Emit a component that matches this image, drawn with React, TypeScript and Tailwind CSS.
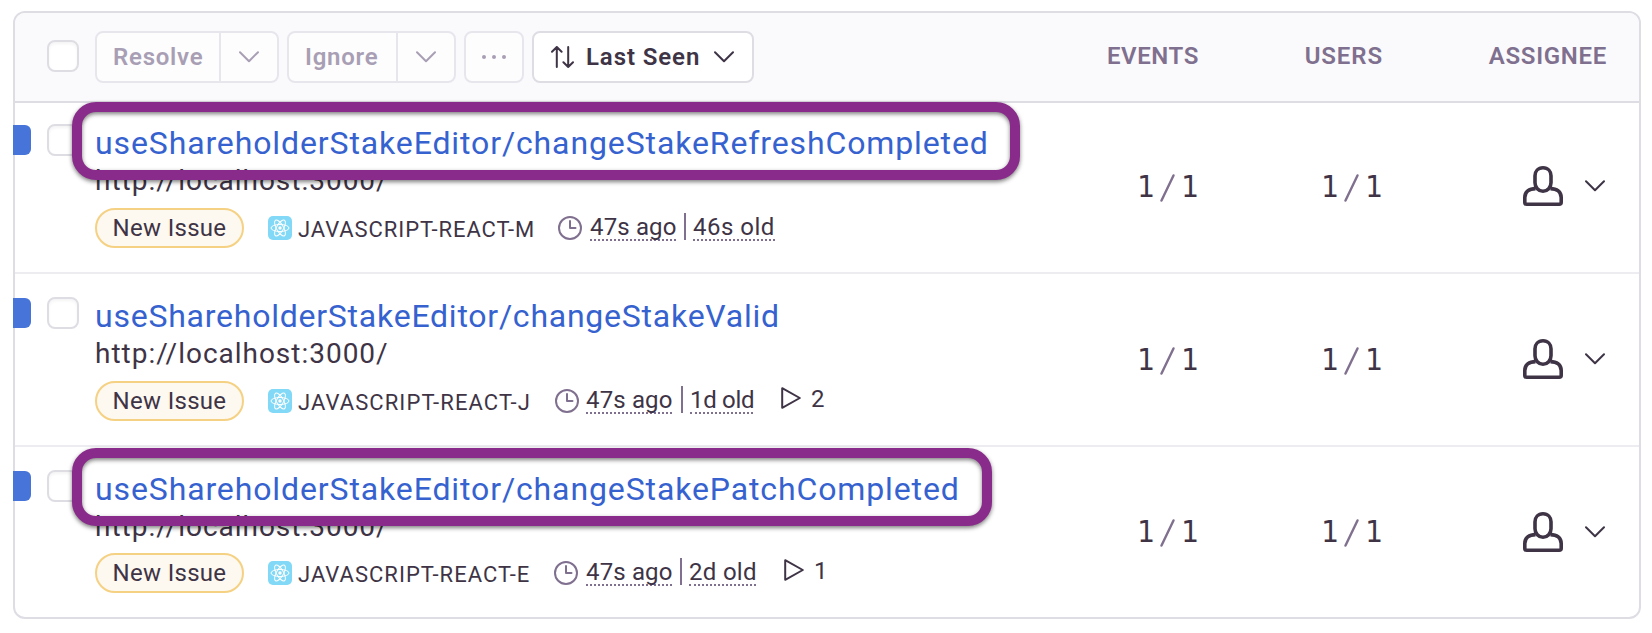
type Issue = {
  title: string;
  titleTracking: string;
  titleBox?: string;
  project: string;
  projectWidth: string;
  clockGap: string;
  age: string;
  ageWidth: string;
  barGap: string;
  replays?: string;
  replayGap?: string;
  row: string;
  metaGap: string;
  ratioGap: string;
};

const issues: Issue[] = [
  {
    title: 'useShareholderStakeEditor/changeStakeRefreshCompleted',
    titleTracking: 'tracking-[0.88px]',
    titleBox: 'w-[948px]',
    project: 'JAVASCRIPT-REACT-M',
    projectWidth: 'w-[260px] tracking-[0.92px]',
    clockGap: 'ml-[8px]',
    age: '46s old',
    ageWidth: 'w-[82px] tracking-[0.5px]',
    barGap: 'ml-[8px] mr-[7px]',
    row: 'h-[173px] border-b-2',
    metaGap: 'mt-[10px]',
    ratioGap: 'mt-[66px]',
  },
  {
    title: 'useShareholderStakeEditor/changeStakeValid',
    titleTracking: 'tracking-[0.76px]',
    project: 'JAVASCRIPT-REACT-J',
    projectWidth: 'w-[257px] tracking-[1.08px]',
    clockGap: 'ml-[7px]',
    age: '1d old',
    ageWidth: 'w-[63px] tracking-[-0.3px]',
    barGap: 'ml-[9px] mr-[7px]',
    replays: '2',
    replayGap: 'ml-[28px]',
    row: 'h-[173px] border-b-2',
    metaGap: 'mt-[10px]',
    ratioGap: 'mt-[66px]',
  },
  {
    title: 'useShareholderStakeEditor/changeStakePatchCompleted',
    titleTracking: 'tracking-[0.88px]',
    titleBox: 'w-[920px]',
    project: 'JAVASCRIPT-REACT-E',
    projectWidth: 'w-[256px] tracking-[1.02px]',
    clockGap: 'ml-[8px]',
    age: '2d old',
    ageWidth: 'w-[67px] tracking-[0.3px]',
    barGap: 'ml-[8px] mr-[7px]',
    replays: '1',
    replayGap: 'ml-[28px]',
    row: 'h-[170px]',
    metaGap: 'mt-[9px]',
    ratioGap: 'mt-[65px]',
  },
];

function Chevron({ className }: { className?: string }) {
  return (
    <svg
      className={`h-[12px] w-[20px] shrink-0 ${className ?? ''}`}
      viewBox="0 0 20 12"
      fill="none"
      stroke="currentColor"
      strokeWidth="2"
      strokeLinecap="round"
      strokeLinejoin="round"
    >
      <path d="M1 1.2 10 10.2 19 1.2" />
    </svg>
  );
}

function Checkbox({ className }: { className?: string }) {
  return (
    <span
      className={`block size-[32px] shrink-0 rounded-[8px] border-2 border-[#dfdde4] bg-white shadow-[inset_0_2px_3px_rgba(43,34,51,0.05)] ${className ?? ''}`}
    />
  );
}

function SplitButton({ label, labelWidth, className }: { label: string; labelWidth: string; className: string }) {
  return (
    <div
      className={`flex h-[52px] shrink-0 rounded-[8px] border-2 border-[#e8e6ed] bg-[#fdfdfe] text-[#a99fb5] ${className}`}
    >
      <span
        className={`flex items-center border-r-2 border-[#e8e6ed] pl-[16px] text-[24px] font-semibold tracking-[0.75px] ${labelWidth}`}
      >
        {label}
      </span>
      <span className="flex flex-1 items-center justify-center">
        <Chevron />
      </span>
    </div>
  );
}

function ReactBadge() {
  return (
    <svg className="size-[24px] shrink-0" viewBox="0 0 24 24">
      <rect width="24" height="24" rx="5" fill="#81d8f7" />
      <g fill="none" stroke="#fff" strokeWidth="1">
        <ellipse cx="12" cy="12" rx="9" ry="3.5" />
        <ellipse cx="12" cy="12" rx="9" ry="3.5" transform="rotate(60 12 12)" />
        <ellipse cx="12" cy="12" rx="9" ry="3.5" transform="rotate(120 12 12)" />
      </g>
      <circle cx="12" cy="12" r="1.7" fill="#fff" />
    </svg>
  );
}

function Clock() {
  return (
    <svg className="size-[24px] shrink-0" viewBox="0 0 24 24" fill="none" stroke="#80708f" strokeWidth="2" strokeLinecap="round">
      <circle cx="12" cy="12" r="11" />
      <path d="M12 5v7h5.5" strokeLinejoin="round" />
    </svg>
  );
}

function Person() {
  return (
    <svg
      className="h-[40px] w-[40px] shrink-0"
      viewBox="0 0 40 40"
      fill="none"
      stroke="#3e3446"
      strokeWidth="3.6"
      strokeLinejoin="round"
    >
      <path d="M20 1.8c5 0 8 3.600 8 8v7c0 4.600-3.400 8.400-8 8.400s-8-3.800-8-8.400v-7c0-4.400 3-8 8-8Z" />
      <path d="M12.600 22.600C6 22.600 1.800 26 1.800 31.500V36.200a2 2 0 0 0 2 2H36.200a2 2 0 0 0 2-2V31.500C38.200 26 34 22.600 27.400 22.600" />
    </svg>
  );
}

function Ratio({ className }: { className: string }) {
  return (
    <div className={`flex h-[40px] shrink-0 items-center justify-end text-[31px] leading-[40px] ${className}`}>
      <span className="-mt-[2px] w-[20px] text-center font-['DejaVu_Sans_Condensed',sans-serif]">1</span>
      <svg className="mr-[5px] ml-[4px] mt-[2px] h-[28px] w-[15px]" viewBox="0 0 15 28" fill="none" stroke="#80708f" strokeWidth="2.4" strokeLinecap="round">
        <path d="M1.500 26.600 13.500 1.400" />
      </svg>
      <span className="-mt-[2px] w-[20px] text-center font-['DejaVu_Sans_Condensed',sans-serif]">1</span>
    </div>
  );
}

function IssueRow({ issue }: { issue: Issue }) {
  return (
    <div className={`flex shrink-0 border-[#edecf1] ${issue.row}`}>
      <span className="mt-[24px] -ml-[2px] block h-[30px] w-[18px] shrink-0 rounded-r-[6px] bg-[#4674d8]" />
      <Checkbox className="mt-[23px] ml-[16px]" />
      <div className="relative ml-[16px] flex flex-1 flex-col pt-[24px]">
        <div
          className={`h-[36px] text-[32px] leading-[36px] whitespace-nowrap text-[#3662d0] ${issue.titleTracking}`}
        >
          {issue.title}
        </div>
        <div className="mt-[3px] h-[34px] text-[28px] leading-[34px] tracking-[0.98px]">http://localhost:3000/</div>
        <div className={`flex h-[40px] items-center ${issue.metaGap}`}>
          <span className="flex h-[40px] w-[149px] shrink-0 items-center justify-center rounded-full border-2 border-[#f5d184] bg-[#fdf8f0] text-[24px] tracking-[0.3px]">
            New Issue
          </span>
          <span className="ml-[24px] flex">
            <ReactBadge />
          </span>
          <span className={`mt-[2px] ml-[6px] shrink-0 text-[22px] ${issue.projectWidth}`}>{issue.project}</span>
          <Clock />
          <span className={`mt-[-2px] h-[26px] w-[86px] shrink-0 text-[24px] leading-[26px] tracking-[0.15px] whitespace-nowrap ${issue.clockGap}`}>
            <span className="block h-[27px] border-b-2 border-dotted border-[#80708f]">47s ago</span>
          </span>
          <span className={`mt-[-3px] block h-[27px] w-[2px] shrink-0 bg-[#80708f] ${issue.barGap}`} />
          <span className={`mt-[-2px] h-[26px] shrink-0 text-[24px] leading-[26px] whitespace-nowrap ${issue.ageWidth}`}>
            <span className="block h-[27px] border-b-2 border-dotted border-[#80708f]">{issue.age}</span>
          </span>
          {issue.replays && (
            <span className={`mt-[-6px] flex items-center ${issue.replayGap}`}>
              <svg className="h-[22px] w-[20px]" viewBox="0 0 20 22" fill="none" stroke="#3e3446" strokeWidth="2" strokeLinejoin="round">
                <path d="M1.200 1.200V20.800L18.800 11Z" />
              </svg>
              <span className="mt-[2px] ml-[10px] text-[24px] leading-[28px]">{issue.replays}</span>
            </span>
          )}
        </div>
        {issue.titleBox && (
          <span
            className={`absolute top-[1px] left-[-23px] block h-[78px] rounded-[24px] border-[10px] border-[#892b8a] drop-shadow-[0_2px_2px_rgba(0,0,0,0.5)] ${issue.titleBox}`}
          />
        )}
      </div>
      <Ratio className={`w-[110px] ${issue.ratioGap}`} />
      <Ratio className={`w-[184px] ${issue.ratioGap}`} />
      <div className="mt-[65px] mr-[34px] ml-[139px] flex h-[40px] shrink-0 items-center">
        <Person />
        <Chevron className="-mt-px ml-[22px]" />
      </div>
    </div>
  );
}

export default function App() {
  return (
    <div className="h-[633px] w-[1652px] bg-white pt-[11px] pl-[13px] font-['Roboto',sans-serif] text-[#3e3446]">
      <div className="flex h-[608px] w-[1628px] flex-col rounded-[12px] border-2 border-[#dfdde4]">
        <div className="flex h-[90px] shrink-0 items-center rounded-t-[10px] border-b-2 border-[#dfdde4] bg-[#fafafc] pl-[32px]">
          <Checkbox className="-mt-[2px]" />
          <SplitButton label="Resolve" labelWidth="w-[124px]" className="ml-[16px] w-[184px]" />
          <SplitButton label="Ignore" labelWidth="w-[109px]" className="ml-[8px] w-[169px]" />
          <div className="ml-[8px] flex h-[52px] w-[60px] shrink-0 items-center justify-center gap-[6px] rounded-[8px] border-2 border-[#e8e6ed] bg-[#fdfdfe]">
            <span className="size-[4px] rounded-full bg-[#a99fb5]" />
            <span className="size-[4px] rounded-full bg-[#a99fb5]" />
            <span className="size-[4px] rounded-full bg-[#a99fb5]" />
          </div>
          <div className="ml-[8px] flex h-[52px] w-[222px] shrink-0 items-center rounded-[8px] border-2 border-[#dfdde4] bg-white pl-[17px]">
            <svg className="h-[22px] w-[23px]" viewBox="0 0 23 22" fill="none" stroke="currentColor" strokeWidth="2" strokeLinecap="round" strokeLinejoin="round">
              <path d="M5.800 21V1M1 5.800 5.800 1l4.800 4.800M17.200 1v20M12.400 16.200l4.800 4.800 4.800-4.800" />
            </svg>
            <span className="ml-[12px] w-[128px] text-[24px] font-semibold tracking-[0.9px]">Last Seen</span>
            <Chevron />
          </div>
          <div className="-mt-[2px] mr-[32px] flex flex-1 justify-end text-[24px] font-semibold text-[#80708f]">
            <span className="tracking-[0.6px]">EVENTS</span>
            <span className="w-[184px] text-right tracking-[0.9px]">USERS</span>
            <span className="w-[224px] text-right tracking-[0.7px]">ASSIGNEE</span>
          </div>
        </div>
        <div className="-mt-[2px] flex flex-col">
          {issues.map((issue) => (
            <IssueRow key={issue.title} issue={issue} />
          ))}
        </div>
      </div>
    </div>
  );
}
